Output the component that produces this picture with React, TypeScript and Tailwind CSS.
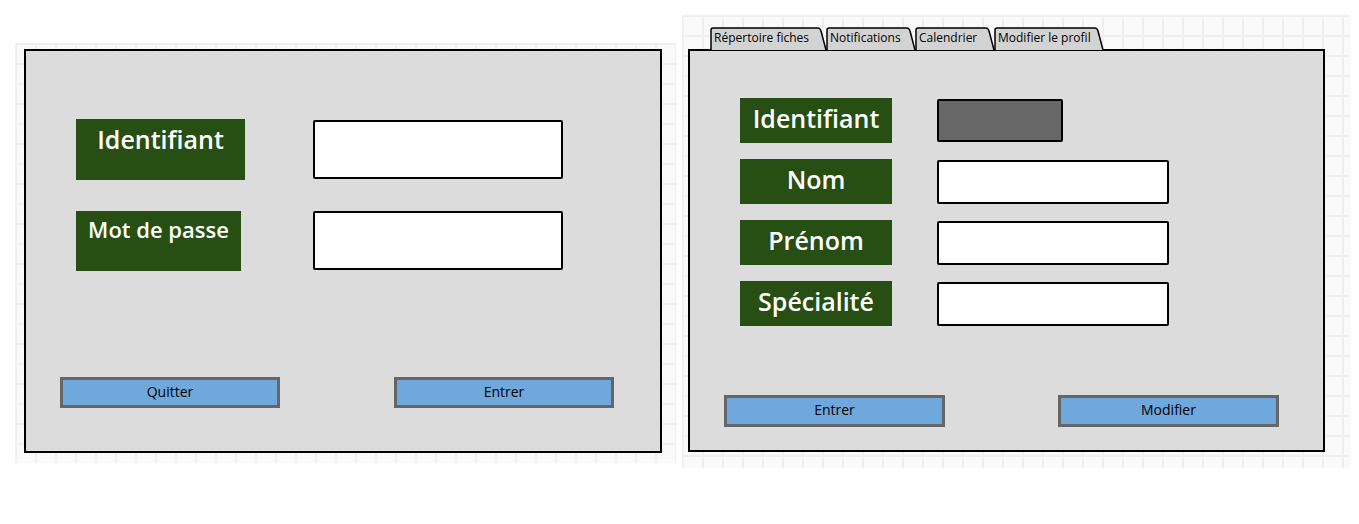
const grid =
  "bg-[#fafafa] bg-[linear-gradient(to_right,#efefef_2px,transparent_2px),linear-gradient(to_bottom,#efefef_2px,transparent_2px)] bg-[size:20px_20px]";

const font = "font-['Open_Sans','Lato',sans-serif] [font-variant-ligatures:none]";

function Label({ text, className }: { text: string; className: string }) {
  return (
    <div className={`flex justify-center bg-[#274e13] font-semibold text-white ${font} ${className}`}>
      {text}
    </div>
  );
}

function Field({ className }: { className: string }) {
  return <div className={`rounded-[2px] border-2 border-black ${className}`} />;
}

function Button({ text, className = "" }: { text: string; className?: string }) {
  return (
    <div
      className={`flex h-[31px] w-[220px] items-center justify-center border-[3px] border-[#666666] bg-[#6fa8dc] pb-[3px] text-[14px] text-black ${font} ${className}`}
    >
      {text}
    </div>
  );
}

const tabs = [
  { label: "Répertoire fiches", w: 117 },
  { label: "Notifications", w: 90 },
  { label: "Calendrier", w: 80 },
  { label: "Modifier le profil", w: 110 },
];

function Tab({ label, w }: { label: string; w: number }) {
  return (
    <div className="relative -mr-[1px] h-[23px] shrink-0" style={{ width: w }}>
      <svg className="absolute inset-0" width={w} height={23}>
        <path
          d={`M1 23 V3 Q1 1 3 1 H${w - 9} Q${w - 7} 1 ${w - 6} 4 L${w - 1} 23`}
          fill="#d3d3d3"
          stroke="#000"
          strokeWidth="1.5"
        />
      </svg>
      <span className="relative block whitespace-nowrap pl-[4px] pt-[2px] text-[12px] leading-[18px] text-black font-['Open_Sans',sans-serif] [font-variant-ligatures:none]">
        {label}
      </span>
    </div>
  );
}

function LoginScreen() {
  return (
    <div className={`mt-[43px] ml-[15px] h-[420px] w-[661px] pl-[9px] pt-[6px] ${grid}`}>
      <div className="flex h-[404px] w-[638px] flex-col border-2 border-black bg-[#dcdcdc] pl-[34px] pt-[68px]">
        <div className="ml-[16px] flex items-start">
          <Label text="Identifiant" className="h-[61px] w-[169px] pt-[3px] text-[25px] leading-[34px]" />
          <Field className="ml-[68px] mt-[1px] h-[59px] w-[250px] bg-white" />
        </div>
        <div className="ml-[16px] mt-[31px] flex items-start">
          <Label text="Mot de passe" className="h-[60px] w-[165px] pt-[3px] text-[22px] leading-[30px]" />
          <Field className="ml-[72px] h-[59px] w-[250px] bg-white" />
        </div>
        <div className="mt-[106px] flex">
          <Button text="Quitter" />
          <Button text="Entrer" className="ml-[114px]" />
        </div>
      </div>
    </div>
  );
}

function ProfileScreen() {
  const rows = ["Nom", "Prénom", "Spécialité"];
  return (
    <div className={`mt-[15px] ml-[6px] h-[453px] w-[668px] pl-[6px] pt-[12px] ${grid}`}>
      <div className="ml-[22px] flex">
        {tabs.map((t) => (
          <Tab key={t.label} {...t} />
        ))}
      </div>
      <div className="-mt-[1px] flex h-[403px] w-[637px] flex-col border-2 border-black bg-[#dcdcdc] pl-[34px] pt-[47px]">
        <div className="ml-[16px] flex items-center">
          <Label text="Identifiant" className="h-[45px] w-[152px] items-center pb-[3px] text-[25px]" />
          <Field className="ml-[45px] h-[43px] w-[126px] bg-[#686868]" />
        </div>
        {rows.map((r) => (
          <div key={r} className="ml-[16px] mt-[16px] flex items-center">
            <Label text={r} className="h-[45px] w-[152px] items-center pb-[3px] text-[25px]" />
            <Field className="ml-[45px] h-[44px] w-[232px] bg-white" />
          </div>
        ))}
        <div className="mt-[69px] flex">
          <Button text="Entrer" className="h-[32px] w-[221px]" />
          <Button text="Modifier" className="ml-[113px] h-[32px] w-[221px]" />
        </div>
      </div>
    </div>
  );
}

export default function App() {
  return (
    <div className="flex h-[524px] w-[1359px] items-start bg-white">
      <LoginScreen />
      <ProfileScreen />
    </div>
  );
}
